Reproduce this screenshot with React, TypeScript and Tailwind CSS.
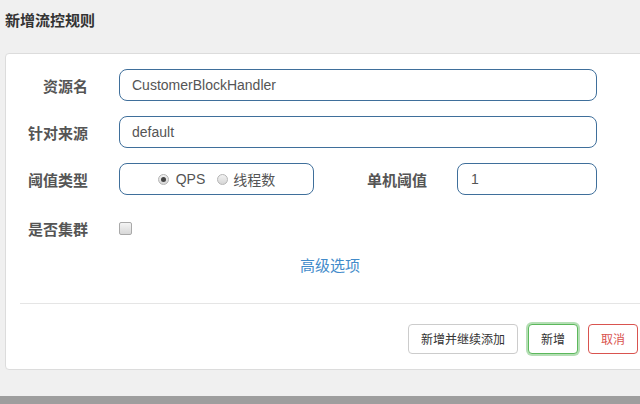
const cjk = { fontFamily: '"Microsoft YaHei", "Noto Sans CJK SC", "Liberation Sans", sans-serif' }
const latin = { fontFamily: '"Liberation Sans", Arial, "Noto Sans CJK SC", sans-serif' }

function Label({ children, width = 'w-[82px]' }: { children: React.ReactNode; width?: string }) {
  return (
    <div className={`${width} shrink-0 pt-[2px] text-right text-[15px] font-bold text-[#555]`} style={cjk}>
      {children}
    </div>
  )
}

function Radio({ checked }: { checked?: boolean }) {
  return (
    <span className="flex h-[11px] w-[11px] items-center justify-center rounded-full border border-[#b5b5b5] bg-gradient-to-b from-[#f2f2f2] to-[#d6d6d6]">
      {checked && <span className="h-[5px] w-[5px] rounded-full bg-[#444]" />}
    </span>
  )
}

export default function App() {
  return (
    <div className="flex h-[404px] w-[640px] flex-col overflow-hidden bg-[#f0f0f0]">
      <h4 className="ml-[5px] mt-[10px] h-[20px] text-[15px] font-bold leading-[20px] text-[#333]" style={cjk}>
        新增流控规则
      </h4>

      <div className="ml-[5px] mt-[23px] w-[650px] rounded-[4px] border border-[#dcdcdc] bg-white pb-[15px] pt-[15px]">
        <div className="flex flex-col gap-[15px]">
          <div className="flex h-[32px] items-center">
            <Label>资源名</Label>
            <div
              className="ml-[31px] flex h-[32px] w-[478px] items-center rounded-[8px] border border-[#3f6f9b] px-[12px] text-[14px] text-[#555]"
              style={latin}
            >
              CustomerBlockHandler
            </div>
          </div>

          <div className="flex h-[32px] items-center">
            <Label>针对来源</Label>
            <div
              className="ml-[31px] flex h-[32px] w-[478px] items-center rounded-[8px] border border-[#3f6f9b] px-[12px] text-[14px] text-[#555]"
              style={latin}
            >
              default
            </div>
          </div>

          <div className="flex h-[32px] items-center">
            <Label>阈值类型</Label>
            <div className="ml-[31px] flex h-[32px] w-[195px] items-center justify-center rounded-[8px] border border-[#3f6f9b] text-[14px] text-[#555]">
              <Radio checked />
              <span className="ml-[7px]" style={latin}>QPS</span>
              <span className="ml-[12px]"><Radio /></span>
              <span className="ml-[5px]" style={cjk}>线程数</span>
            </div>
            <div className="ml-[52px]">
              <Label width="w-[61px]">单机阈值</Label>
            </div>
            <div
              className="ml-[30px] flex h-[32px] w-[140px] items-center rounded-[8px] border border-[#3f6f9b] px-[13px] text-[14px] text-[#555]"
              style={latin}
            >
              1
            </div>
          </div>

          <div className="mt-[2px] flex h-[32px] items-center">
            <Label>是否集群</Label>
            <span className="ml-[31px] h-[13px] w-[13px] rounded-[2px] border border-[#a9a9a9] bg-gradient-to-b from-[#f4f4f4] to-[#d8d8d8]" />
          </div>
        </div>

        <div className="mt-[10px] flex h-[22px] items-center justify-center">
          <span className="text-[15px] text-[#428bca]" style={cjk}>高级选项</span>
        </div>

        <div className="ml-[14px] mt-[27px] h-px bg-[#e5e5e5]" />

        <div className="mt-[20px] flex justify-end gap-[10px] pr-[16px] text-[12px]" style={cjk}>
          <button className="h-[30px] rounded-[4px] border border-[#ccc] bg-white px-[12px] text-[#333]">
            新增并继续添加
          </button>
          <button className="h-[30px] rounded-[4px] border border-[#5cb85c] bg-white px-[12px] text-[#333] shadow-[0_0_0_2px_rgba(92,184,92,0.45)]">
            新增
          </button>
          <button className="h-[30px] rounded-[4px] border border-[#d9534f] bg-white px-[12px] text-[#d9534f]">
            取消
          </button>
        </div>
      </div>

      <div className="mt-auto h-[8px] bg-[#9e9e9e]" />
    </div>
  )
}
